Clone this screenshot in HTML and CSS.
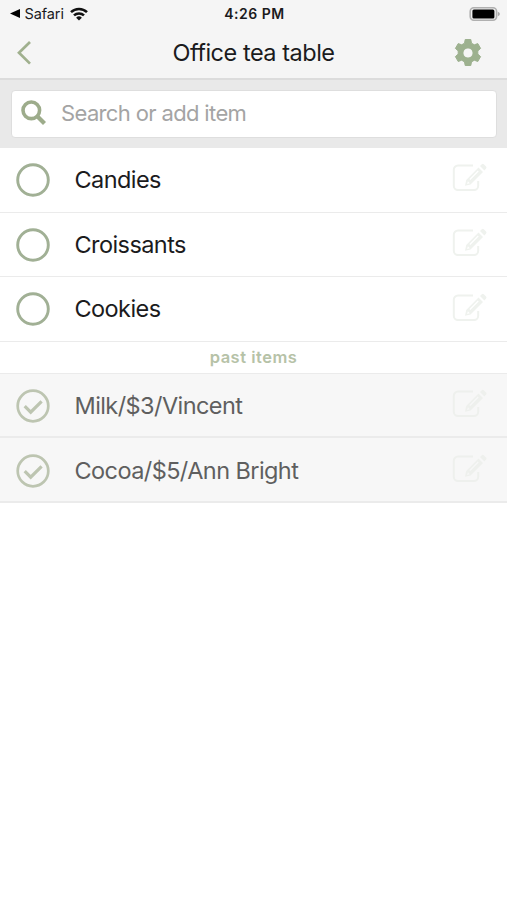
FILE: index.html
```html
<!DOCTYPE html>
<html lang="en">
<head>
<meta charset="utf-8">
<title>Office tea table</title>
<link rel="stylesheet" href="styles.css">
</head>
<body>
<svg width="0" height="0" class="defs">
  <symbol id="edit" viewBox="0 0 36 32">
    <path d="M22 3.500H7a4.200 4.200 0 0 0-4.200 4.200v16A4.200 4.200 0 0 0 7 27.900h16a4.200 4.200 0 0 0 4.200-4.200V19" fill="none" stroke="currentColor" stroke-width="2"/>
    <path fill="currentColor" fill-rule="evenodd" d="M27.500 5.500l4.500 4.500L19.500 22.500l-5.500 1.200 1.200-5.800zM16.900 19.300l-.8 2.700 2.700-.7zM26.800 8.600L18.400 17l.9.9 8.400-8.400zM29 4l1.800-1.700q1-.9 2 0l2.300 2.300q.9 1 0 2L33.400 8.400z"/>
  </symbol>
  <symbol id="circle" viewBox="0 0 34 34">
    <circle cx="17" cy="17" r="15.300" fill="none" stroke="currentColor" stroke-width="2.900"/>
  </symbol>
  <symbol id="check" viewBox="0 0 34 34">
    <circle cx="17" cy="17" r="15.300" fill="none" stroke="currentColor" stroke-width="2.700"/>
    <path d="M8.700 17.200l6 6L25.600 12.300" fill="none" stroke="currentColor" stroke-width="3.200"/>
  </symbol>
</svg>
<header class="top">
  <div class="status">
    <div class="status-left">
      <svg class="back-app" viewBox="0 0 10 9"><path d="M0 4.500L10 0v9z"/></svg>
      <span class="app">Safari</span>
      <svg class="wifi" viewBox="0 0 18 14">
        <path d="M1 5.200a11.400 11.400 0 0 1 16 0M4 8.400a7.200 7.200 0 0 1 10 0" fill="none" stroke="#111" stroke-width="2.500"/>
        <path d="M9 13.600L6.100 10.700a4.200 4.200 0 0 1 5.800 0z" fill="#111"/>
      </svg>
    </div>
    <span class="time">4:26 PM</span>
    <svg class="battery" viewBox="0 0 31 14">
      <rect x="1.200" y=".8" width="26.400" height="12.400" rx="3.600" fill="#f0f0f0" stroke="#b0b0b0" stroke-width="1.600"/>
      <rect x="3.400" y="2.500" width="22" height="9" rx="1.500"/>
      <path d="M28.900 4.800q2 .8 2 2.200t-2 2.200z" fill="#aaa"/>
    </svg>
  </div>
  <div class="nav">
    <svg class="back" viewBox="0 0 14 24"><path d="M13 1L2 11.800l11 10.800" fill="none" stroke="currentColor" stroke-width="2.700"/></svg>
    <h1 class="title">Office tea table</h1>
    <svg class="gear" viewBox="0 0 28 28">
      <path fill="currentColor" fill-rule="evenodd" stroke="currentColor" stroke-width="1" stroke-linejoin="round" d="M11.200.5h5.600l.7 3.700 2.800 1.600 3.500-1.200 2.800 4.800-2.800 2.500v3.200l2.800 2.500-2.800 4.900-3.500-1.300-2.800 1.700-.7 3.600h-5.600l-.7-3.600-2.800-1.700-3.500 1.300-2.800-4.900 2.800-2.500v-3.200L1.400 9.400l2.800-4.800 3.500 1.200 2.800-1.600zM14 8.900a5.100 5.100 0 1 0 0 10.200 5.100 5.100 0 0 0 0-10.200z"/>
    </svg>
  </div>
</header>
<div class="search-bar">
  <div class="search-box">
    <svg class="search-icon" viewBox="0 0 26 26"><circle cx="10.300" cy="10.300" r="8.300" fill="none" stroke="currentColor" stroke-width="3.600"/><path d="M16.500 16.500l7 7" stroke="currentColor" stroke-width="4.200"/></svg>
    <span class="placeholder">Search or add item</span>
  </div>
</div>
<main>
  <div class="row"><svg class="mark"><use href="#circle"/></svg><span class="name">Candies</span><svg class="edit"><use href="#edit"/></svg></div>
  <div class="row"><svg class="mark"><use href="#circle"/></svg><span class="name">Croissants</span><svg class="edit"><use href="#edit"/></svg></div>
  <div class="row"><svg class="mark"><use href="#circle"/></svg><span class="name">Cookies</span><svg class="edit"><use href="#edit"/></svg></div>
  <div class="divider"><span class="past-label">past items</span></div>
  <div class="row past"><svg class="mark"><use href="#check"/></svg><span class="name">Milk/$3/Vincent</span><svg class="edit"><use href="#edit"/></svg></div>
  <div class="row past"><svg class="mark"><use href="#check"/></svg><span class="name">Cocoa/$5/Ann Bright</span><svg class="edit"><use href="#edit"/></svg></div>
</main>
</body>
</html>
```
FILE: styles.css
```css
* { box-sizing: border-box; }
body {
  margin: 0;
  min-height: 900px;
  background: #fff;
  color: #1b1b1d;
  font-family: Inter, "Liberation Sans", sans-serif;
}
svg { display: block; flex: none; }
.defs { display: none; }
.top {
  height: 80px;
  background: #f5f5f5;
  border-bottom: 2px solid #dcdcdc;
}
.status {
  height: 27px;
  display: grid;
  grid-template-columns: 1fr auto 1fr;
  align-items: center;
  padding: 0 7px 0 10px;
}
.status-left { display: flex; align-items: center; }
.back-app { width: 10px; height: 9px; }
.app { margin-left: 4.500px; font-size: 14.500px; width: 40.500px; letter-spacing: -0.100px; white-space: nowrap; }
.wifi { width: 18px; height: 14px; margin-left: 5px; }
.time { margin-right: 1px; font-size: 14px; font-weight: 600; letter-spacing: 0.500px; }
.battery { width: 31px; height: 14px; justify-self: end; }
.nav {
  height: 51px;
  display: grid;
  grid-template-columns: 1fr auto 1fr;
  align-items: center;
  padding: 0 17px;
  color: #a0b08e;
}
.back { width: 14px; height: 24px; }
.title {
  margin: 0;
  color: #1b1b1d;
  font-size: 23.500px;
  font-weight: 400;
  line-height: 30px;
  letter-spacing: -0.480px;
}
.gear { width: 28px; height: 28px; margin-right: 8px; justify-self: end; color: #9db18f; }
.search-bar {
  height: 68px;
  padding: 10px 10px 9px 11px;
  background: #e9e9e9;
  border-bottom: 1px solid #e9e9e9;
}
.search-box {
  height: 48px;
  display: flex;
  align-items: center;
  padding: 0 0 2px 9px;
  background: #fff;
  border: 1px solid #dedede;
  border-radius: 4px;
  color: #9dac8b;
}
.search-icon { width: 26px; height: 26px; }
.placeholder { margin-left: 14px; color: #a4a4a4; font-size: 22px; letter-spacing: -0.640px; }
.row {
  height: 64.700px;
  display: flex;
  align-items: center;
  padding: 0 20px 0 15.700px;
  border-bottom: 1px solid #ebebeb;
}
.mark { width: 34px; height: 34px; color: #a1b095; }
.name { flex: 1; margin-left: 24.800px; font-size: 23.500px; letter-spacing: -0.580px; line-height: 30px; white-space: nowrap; }
.edit { width: 36px; height: 32px; margin-bottom: 3px; color: #eff2ee; }
.divider {
  height: 31.500px;
  display: flex;
  align-items: center;
  justify-content: center;
  border-bottom: 1px solid #ebebeb;
}
.past-label { color: #b6c2a7; font-size: 16.500px; font-weight: 600; letter-spacing: 0.500px; }
.past { padding-top: 2px; background: #f7f7f7; color: #5f5f5f; border-bottom: 2px solid #ebebeb; }
.past .mark { color: #bdc5b1; }
.past .edit { color: #eef0ed; }
```
